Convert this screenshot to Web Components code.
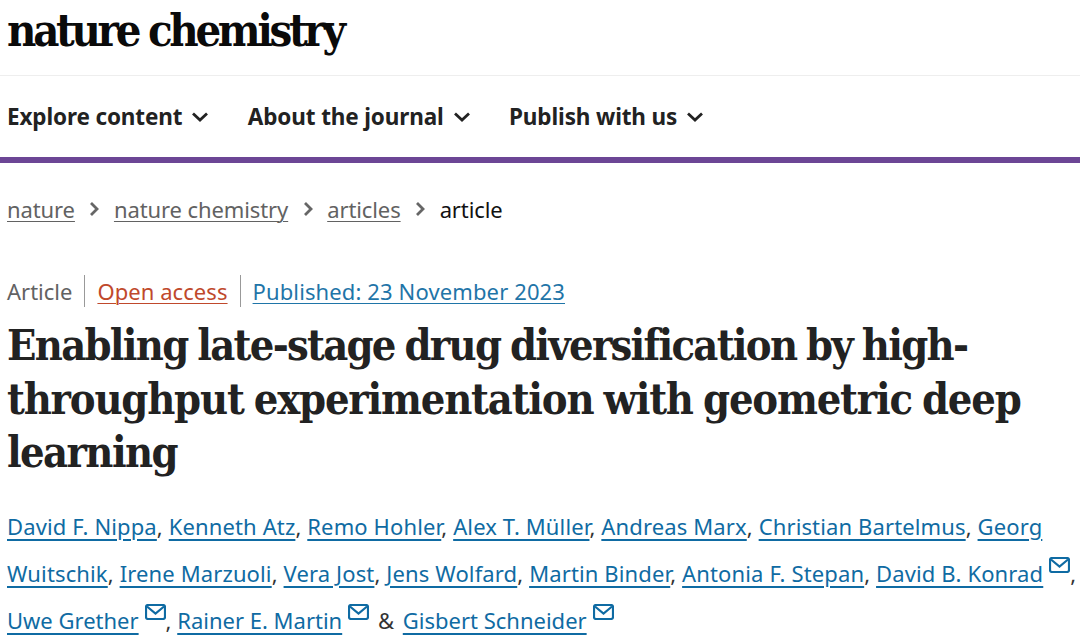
<!DOCTYPE html>
<html lang="en"><head><meta charset="utf-8"><title>Nature Chemistry</title>
<style>
html,body{margin:0;padding:0;background:#fff;overflow:hidden}
body{font-family:"Noto Sans","Open Sans",sans-serif;color:#222;width:1080px;height:637px}
</style></head><body>
<site-logo>nature chemistry</site-logo>
<site-nav><nav-item>Explore content</nav-item><nav-item>About the journal</nav-item><nav-item>Publish with us</nav-item></site-nav>
<bread-crumbs><crumb-link>nature</crumb-link><crumb-link>nature chemistry</crumb-link><crumb-link>articles</crumb-link><crumb-link current>article</crumb-link></bread-crumbs>
<article-meta></article-meta>
<article-title><span style="letter-spacing:-1.72px">Enabling late-stage drug diversification by high-</span><br><span style="letter-spacing:-1.2px">throughput experimentation with geometric deep</span><br>learning</article-title>
<author-list></author-list>
<script>
const def=(n,html)=>customElements.define(n,class extends HTMLElement{constructor(){super();this.attachShadow({mode:'open'}).innerHTML=html;}});
def('site-logo',`<style>:host{display:block;height:75px;border-bottom:1px solid #eee;padding-left:7px;font:700 45px/62px "DejaVu Serif Condensed","DejaVu Serif",serif;font-stretch:condensed;letter-spacing:-3.3px;word-spacing:-1px;color:#0a0a0a;overflow:hidden}
</style><slot></slot>`);
def('site-nav',`<style>:host{display:flex;gap:38.4px;height:81px;align-items:center;padding-left:7px;border-bottom:6px solid #6c4695}</style><slot></slot>`);
def('nav-item',`<style>:host{display:flex;align-items:center;gap:9px;font:700 22.5px/30px "Noto Sans",sans-serif;letter-spacing:-.13px;color:#222}svg{width:18px;height:10px;fill:none;stroke:#222;stroke-width:2.8}</style><slot></slot><svg viewBox="0 0 18 10"><path d="M2 1.5l7 6.5 7-6.5"/></svg>`);
def('bread-crumbs',`<style>:host{display:flex;align-items:center;gap:14.5px;padding:30px 0 0 7px;height:32px;font:400 22px/32px "Noto Sans",sans-serif;letter-spacing:-.1px}</style><slot></slot>`);
def('crumb-link',`<style>:host{display:inline-flex;align-items:center;gap:14.5px;color:#626262}a{color:inherit;text-decoration:underline;text-decoration-thickness:1px;text-underline-offset:3px}:host([current]){color:#111}:host([current]) a{text-decoration:none}:host([current]) svg{display:none}svg{width:10px;height:16px;fill:none;stroke:#666;stroke-width:2.8}</style><a><slot></slot></a><svg viewBox="0 0 10 16"><path d="M2 2l6 6-6 6"/></svg>`);
def('article-meta',`<style>:host{display:flex;align-items:center;padding:50px 0 0 7px;height:32px;font:400 22px/32px "Noto Sans",sans-serif;color:#626262}
span{padding-right:12px}span+span{border-left:1px solid #999;padding-left:12px}
a{text-decoration:underline;text-decoration-thickness:1px;text-underline-offset:3px}.o{color:#c0492c;letter-spacing:.07px}.p{color:#1f75a8;letter-spacing:.12px}</style>
<span>Article</span><span><a class="o">Open access</a></span><span><a class="p">Published: 23 November 2023</a></span>`);
def('article-title',`<style>:host{display:block;margin:12px 0 0;padding-left:7px;font:700 43px/53.5px "DejaVu Serif Condensed","DejaVu Serif",serif;font-stretch:condensed;letter-spacing:-1.6px;word-spacing:-2px;color:#222;white-space:nowrap}</style><slot></slot>`);
def('author-link',`<style>:host{display:inline}a{color:#0f6ba3;text-decoration:underline;text-decoration-thickness:2px;text-underline-offset:4px}svg{display:none;width:21px;height:16px;margin-left:6px;vertical-align:9px;fill:none;stroke:#0f6ba3;stroke-width:2.2}:host([mail]) svg{display:inline}</style><a><slot></slot></a><svg viewBox="0 0 21 16"><rect x="1" y="1" width="19" height="14" rx="2"/><path d="M2 2.5l8.5 7 8.5-7"/></svg>`);
customElements.define('author-list',class extends HTMLElement{constructor(){super();
const r=this.attachShadow({mode:'open'});
const a=(n,m)=>`<author-link${m?' mail':''}>${n}</author-link>`;
r.innerHTML=`<style>:host{display:block;margin-top:23px;padding-left:7px;font:400 22px/47px "Noto Sans",sans-serif;letter-spacing:.13px;color:#333;white-space:nowrap}.last{letter-spacing:0}.amp{margin:0 3px 0 3px}</style>`+
['David F. Nippa','Kenneth Atz','Remo Hohler','Alex T. Müller','Andreas Marx','Christian Bartelmus','Georg'].map(n=>a(n)).join(', ')+'<br>'+
['Wuitschik','Irene Marzuoli','Vera Jost','Jens Wolfard','Martin Binder','Antonia F. Stepan'].map(n=>a(n)).join(', ')+', '+a('David B. Konrad',1)+',<br><span class="last">'+
a('Uwe Grether',1)+', '+a('Rainer E. Martin',1)+' <span class="amp">&amp;</span> '+a('Gisbert Schneider',1)+'</span>';
}});
</script></body></html>
